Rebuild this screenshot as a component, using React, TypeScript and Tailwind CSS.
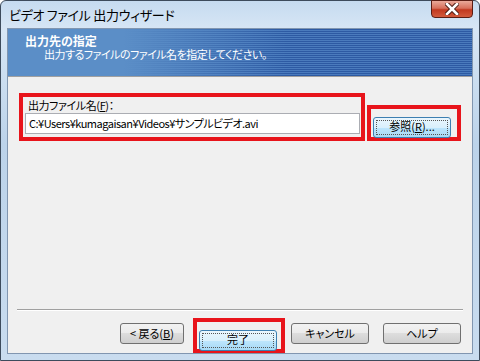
import React from "react";

const font = "font-['Noto_Sans_CJK_JP',sans-serif] [font-feature-settings:'palt']";

const WinButton = ({
  children,
  focused,
  className,
}: {
  children: React.ReactNode;
  focused?: boolean;
  className?: string;
}) => {
  return (
    <button
      className={`h-[21px] rounded-[3px] border p-[2px] text-[11px] leading-[13px] text-black ${
        focused
          ? "border-[#3c7fb1] bg-[linear-gradient(to_bottom,#eaf6fd_0%,#d9f0fc_50%,#bee6fd_50%,#a7d9f5_100%)]"
          : "border-[#707070] bg-[linear-gradient(to_bottom,#f2f2f2_0%,#ebebeb_50%,#dddddd_50%,#cfcfcf_100%)]"
      } ${className ?? ""}`}
    >
      <div
        className={`w-full h-full flex items-center justify-center pb-[1px] ${
          focused ? "border border-dotted border-[#555]" : ""
        }`}
      >
        {children}
      </div>
    </button>
  );
};

export default function App() {
  return (
    <div
      className={`${font} w-[480px] h-[361px] flex flex-col border border-[#3d4b5c] rounded-t-[6px] bg-[linear-gradient(to_bottom,#c6dbf0_0%,#d7e6f5_8%,#bcd3ea_40%,#c9dcef_100%)]`}
    >
      {/* title bar */}
      <div className="h-[27px] flex items-start pl-[8px] pr-[6px]">
        <div className="flex-1 pt-[5px] text-[13px] leading-[18px] tracking-[-0.3px] text-black">
          ビデオ ファイル 出力ウィザード
        </div>
        <div className="w-[42px] h-[18px] -mt-[1px] rounded-b-[4px] border border-[#5a1d14] bg-[linear-gradient(to_bottom,#e9a99a_0%,#d7705c_45%,#c1381f_55%,#d25a3c_100%)] flex items-center justify-center">
          <svg width="14" height="12" viewBox="0 0 14 12">
            <path
              d="M2 1 L12 11 M12 1 L2 11"
              stroke="#4a1a12"
              strokeWidth="4.5"
              strokeLinecap="square"
            />
            <path
              d="M2 1 L12 11 M12 1 L2 11"
              stroke="#ffffff"
              strokeWidth="2.6"
              strokeLinecap="square"
            />
          </svg>
        </div>
      </div>

      {/* client */}
      <div className="flex-1 mx-[6px] mb-[6px] border border-[#8196b0] bg-[#f0f0f0] flex flex-col">
        <div className="h-[48px] border-b border-[#a0a0a0] pt-[5px] pl-[17px] text-white [background:linear-gradient(to_right,#5b8ec7_25%,rgba(91,142,199,0)_60%),repeating-linear-gradient(to_bottom,#2d5aa3_0px,#2d5aa3_1px,#4a7bbd_1px,#4a7bbd_2px),linear-gradient(to_right,#5b8ec7,#3f6fb3)]">
          <div className="font-bold text-[12px] leading-[14px]">出力先の指定</div>
          <div className="pl-[19px] text-[11px] leading-[13px] tracking-[-0.5px]">
            出力するファイルのファイル名を指定してください。
          </div>
        </div>

        <div className="flex-1 flex items-start pt-[16px] pl-[11px]">
          <div className="w-[346px] h-[48px] border-[4px] border-[#e8141b] pl-[2px] pr-[1px] pt-[1px]">
            <div className="h-[14px] pl-[3px] text-[11px] leading-[14px] tracking-[-0.4px] text-black">
              出力ファイル名(<span className="underline">F</span>)：
            </div>
            <div className="mt-[1px] h-[21px] border border-[#abadb3] bg-white flex items-center pl-[3px] text-[11px] tracking-[-0.5px] text-black">
              C:¥Users¥kumagaisan¥Videos¥サンプルビデオ.avi
            </div>
          </div>
          <div className="ml-[2px] mt-[12px] w-[94px] h-[36px] border-[4px] border-[#e8141b] pl-[2px] pt-[3px]">
            <WinButton focused className="w-[78px]">
              参照(<span className="underline">R</span>)...
            </WinButton>
          </div>
        </div>

        <div className="mx-[9px] h-[2px] border-t border-[#a0a0a0] border-b border-b-white" />

        <div className="h-[42px] flex items-start pt-[7px] pl-[112px]">
          <WinButton className="mt-[5px] w-[64px]">
            &lt; 戻る(<span className="underline">B</span>)
          </WinButton>
          <div className="ml-[9px] w-[92px] h-[35px] border-[4px] border-[#e8141b] pl-[2px] pt-[3px]">
            <WinButton focused className="w-[78px]">
              完了
            </WinButton>
          </div>
          <WinButton className="ml-[6px] mt-[5px] w-[78px]">キャンセル</WinButton>
          <WinButton className="ml-[14px] mt-[5px] w-[78px]">ヘルプ</WinButton>
        </div>
      </div>
    </div>
  );
}
